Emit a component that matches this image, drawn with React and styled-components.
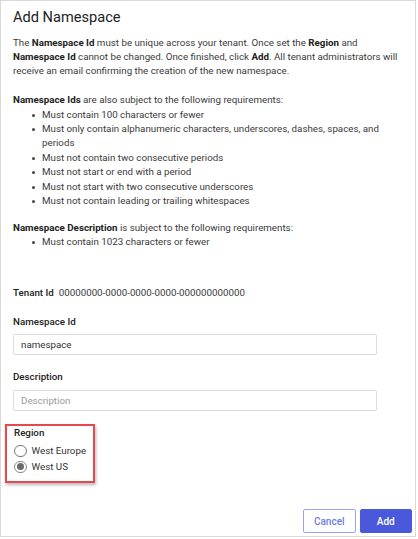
import React from "react";
import styled, { createGlobalStyle } from "styled-components";

const Global = createGlobalStyle`
  html, body { margin: 0; padding: 0; background: #ffffff; }
  body { font-family: Roboto, "Noto Sans", Arial, sans-serif; }
  * { box-sizing: border-box; }
`;

const Panel = styled.div`
  width: 416px;
  height: 537px;
  border: 1px solid #d9d9d9;
  background: #fff;
  padding: 7px 3px 3px 12px;
  display: flex;
  flex-direction: column;
  color: #3a3a3a;
  font-size: 9.75px;
  line-height: 14.4px;
`;

const Title = styled.h1`
  margin: 0 0 9.5px;
  font-size: 14.6px;
  line-height: 18px;
  font-weight: 400;
  color: #222;
`;

const Para = styled.p`
  margin: 0 0 ${(p) => p.$gap || 14}px;
  padding-right: 4px;
`;

const B = styled.b`
  font-weight: 700;
  color: #222;
`;

const List = styled.ul`
  margin: 0;
  padding: 0 18px 0 29px;
  list-style: none;
`;

const Item = styled.li`
  position: relative;
  &::before {
    content: "";
    position: absolute;
    left: -10px;
    top: 6px;
    width: 3px;
    height: 3px;
    border-radius: 50%;
    background: #444;
  }
`;

const Section = styled.div`
  margin-bottom: ${(p) => p.$gap || 0}px;
`;

const TenantRow = styled.div`
  display: flex;
  gap: 5px;
  margin-top: 36.5px;
  margin-bottom: 14px;
`;

const Label = styled.div`
  font-weight: 500;
  color: #222;
  margin-bottom: ${(p) => p.$gap ?? 5}px;
`;

const Input = styled.input`
  display: block;
  width: 364px;
  height: 21.5px;
  border: 1px solid #dcdcdc;
  border-radius: 2px;
  padding: 0 7px;
  font-family: Roboto, Arial, sans-serif;
  font-size: 9.75px;
  color: #333;
  margin-bottom: ${(p) => p.$gap || 0}px;
  outline: none;
  &::placeholder { color: #9a9a9a; }
`;

const RegionBox = styled.div`
  margin-top: 13px;
  margin-left: -8px;
  width: 90px;
  border: 2px solid #e8474d;
  box-shadow: 1px 2px 3px rgba(0, 0, 0, 0.28);
  padding: 0 0 6px 7px;
`;

const RadioRow = styled.label`
  display: flex;
  align-items: center;
  gap: 5px;
  height: 16px;
  color: #333;
`;

const RadioCircle = styled.span`
  width: 12.5px;
  height: 12.5px;
  border-radius: 50%;
  border: 1px solid ${(p) => (p.$checked ? "#8a8a8a" : "#777")};
  display: flex;
  align-items: center;
  justify-content: center;
  &::after {
    content: "";
    width: 7px;
    height: 7px;
    border-radius: 50%;
    background: ${(p) => (p.$checked ? "#6a6a6a" : "transparent")};
  }
`;

const Footer = styled.div`
  margin-top: auto;
  display: flex;
  justify-content: flex-end;
  gap: 4px;
`;

const Button = styled.button`
  width: 52.5px;
  height: 24px;
  border-radius: 2px;
  font-family: Roboto, Arial, sans-serif;
  font-size: 10px;
  font-weight: 500;
  cursor: pointer;
  border: 1px solid ${(p) => (p.$primary ? "#4a58dc" : "#9aa3ee")};
  background: ${(p) => (p.$primary ? "#4a58dc" : "#fff")};
  color: ${(p) => (p.$primary ? "#fff" : "#6f7ce2")};
`;

export default function App() {
  return (
    <>
      <Global />
      <Panel>
        <Title>Add Namespace</Title>
        <Para $gap={14.4}>
          The <B>Namespace Id</B> must be unique across your tenant. Once set the <B>Region</B> and{" "}
          <B>Namespace Id</B> cannot be changed. Once finished, click <B>Add</B>. All tenant administrators will
          receive an email confirming the creation of the new namespace.
        </Para>
        <Section $gap={12.5}>
          <div>
            <B>Namespace Ids</B> are also subject to the following requirements:
          </div>
          <List>
            <Item>Must contain 100 characters or fewer</Item>
            <Item>Must only contain alphanumeric characters, underscores, dashes, spaces, and periods</Item>
            <Item>Must not contain two consecutive periods</Item>
            <Item>Must not start or end with a period</Item>
            <Item>Must not start with two consecutive underscores</Item>
            <Item>Must not contain leading or trailing whitespaces</Item>
          </List>
        </Section>
        <Section>
          <div>
            <B>Namespace Description</B> is subject to the following requirements:
          </div>
          <List>
            <Item>Must contain 1023 characters or fewer</Item>
          </List>
        </Section>
        <TenantRow>
          <Label $gap={0}>Tenant Id</Label>
          <span>00000000-0000-0000-0000-000000000000</span>
        </TenantRow>
        <Label>Namespace Id</Label>
        <Input defaultValue="namespace" $gap={15} />
        <Label>Description</Label>
        <Input placeholder="Description" />
        <RegionBox>
          <Label $gap={2}>Region</Label>
          <RadioRow>
            <RadioCircle />
            West Europe
          </RadioRow>
          <RadioRow>
            <RadioCircle $checked />
            West US
          </RadioRow>
        </RegionBox>
        <Footer>
          <Button>Cancel</Button>
          <Button $primary>Add</Button>
        </Footer>
      </Panel>
    </>
  );
}
